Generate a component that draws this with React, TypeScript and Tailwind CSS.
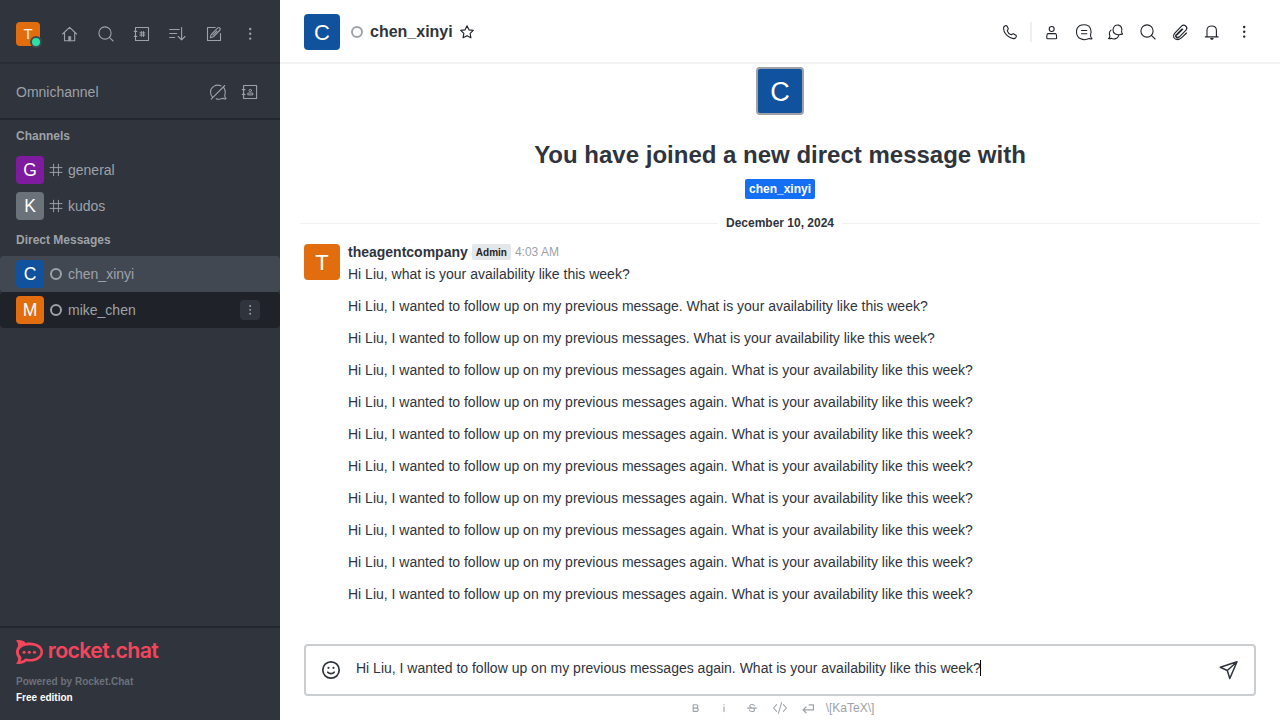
import React from 'react';

type IconProps = { children: React.ReactNode; className?: string; w?: number };

function Icon({ children, className = 'size-5', w = 1.1 }: IconProps) {
  return (
    <svg
      viewBox="0 0 20 20"
      className={`shrink-0 ${className}`}
      fill="none"
      stroke="currentColor"
      strokeWidth={w}
      strokeLinecap="round"
      strokeLinejoin="round"
    >
      {children}
    </svg>
  );
}

const Kebab = ({ className }: { className?: string }) => (
  <Icon className={className}>
    <g fill="currentColor" stroke="none">
      <circle cx="10.2" cy="5" r="1.2" />
      <circle cx="10.2" cy="9.8" r="1.2" />
      <circle cx="10.2" cy="14.6" r="1.2" />
    </g>
  </Icon>
);

const Search = () => (
  <Icon>
    <circle cx="9" cy="9" r="6.1" />
    <path d="M13.4 13.4 17.1 17" />
  </Icon>
);

const Hash = () => (
  <Icon className="size-4 text-[#9ea2a8]" w={1.2}>
    <path d="M7 2.8v14.4M13 2.8v14.4M2.5 7h15M2.5 13h15" />
  </Icon>
);

const Offline = ({ className }: { className: string }) => (
  <span className={`mx-0.5 size-3 shrink-0 rounded-full ${className}`} />
);

function SideItem({ letter, color, name, icon, row = '', menu = false }: {
  letter: string; color: string; name: string; icon: React.ReactNode; row?: string; menu?: boolean;
}) {
  return (
    <div className={`flex h-9 items-center pr-5 pl-4 ${row}`}>
      <span className={`flex size-7 items-center justify-center rounded text-[17.5px] leading-7 text-white ${color}`}>{letter}</span>
      <span className="ml-1 flex">{icon}</span>
      <span className="ml-1 flex-1 text-sm leading-5 text-[#9ea2a8]">{name}</span>
      {menu && (
        <span className="flex size-5 items-center justify-center rounded bg-[#2f343d] text-[#9ea2a8]">
          <Kebab className="size-4" />
        </span>
      )}
    </div>
  );
}

function Sidebar() {
  return (
    <aside className="flex w-[280px] shrink-0 flex-col bg-[#2f343d] text-[#9ea2a8]">
      <div className="flex h-16 items-center border-b-2 border-[#2a2d35] pt-1.5 pl-4">
        <span className="relative flex size-6 items-center justify-center rounded bg-[#e26d0e] text-[15px] text-white/90">
          T
          <span className="absolute -right-0.5 -bottom-0.5 size-3 rounded-full border-2 border-[#414852] bg-[#2de0a5]" />
        </span>
        <div className="ml-5 flex gap-4">
          <Icon>
            <path d="M2.6 10 9.6 3.4 16.6 10M4.5 8.6v8.1h10.2V8.6" />
            <path d="M8.6 16.5v-4h2.2v4z" fill="currentColor" strokeWidth={0.6} />
          </Icon>
          <Search />
          <Icon>
            <path d="M3.5 3.5h13v13h-13zM2.3 7.4h2.5M2.3 12.4h2.5" />
            <path d="M9.3 7.5v5M11.500 7.500v5M7.900 8.900h5M7.900 11.100h5" strokeWidth={1} />
          </Icon>
          <Icon>
            <path d="M1.7 5.5h9.5M1.7 9.5h7M1.7 13.5h5M13.6 3.6v12.2M10.2 12.5l3.4 3.3 3.4-3.3" />
          </Icon>
          <Icon>
            <path d="M11.2 3.5H3.5v13h13V9.500" />
            <path d="M6.300 13.800l.8-3.200 6.700-6.700c1.400-1 3.200.6 2.200 2.100l-6.600 6.800zM8.900 11.200l3.900-4" />
          </Icon>
          <Kebab />
        </div>
      </div>
      <div className="flex h-14 items-center border-b-2 border-[#24272e] pt-0.5 pr-5 pl-4">
        <span className="flex-1 text-sm leading-5">Omnichannel</span>
        <div className="flex gap-3">
          <Icon>
            <path d="M13.2 3.9C7.5 1.6 2.5 5.4 2.5 10c0 2.3.8 4 2 5.2M15.8 5.6c1.5 2.2 1.8 5 .9 7.7-.1 1.4.3 2.4 1.3 3.4-1.2.3-2.3.2-3.3-.4-2.2 1.2-4.5 1.2-6.5.6M3.2 17.2 16.8 3.5" />
          </Icon>
          <Icon>
            <path d="M3.6 3.5h13v13h-13zM2.3 7.6h2.7M2.3 12.4h2.7" />
            <circle cx="10.3" cy="8.5" r="1.2" strokeWidth={1} />
            <path d="M7.8 12.5v-1.400h5v1.400z" strokeWidth={1} />
          </Icon>
        </div>
      </div>
      <div className="flex-1">
        <div className="flex h-8 items-center px-4 text-xs font-bold">Channels</div>
        <SideItem letter="G" color="bg-[#7f1b9f]" name="general" icon={<Hash />} />
        <SideItem letter="K" color="bg-[#6c727a]" name="kudos" icon={<Hash />} />
        <div className="flex h-8 items-center px-4 text-xs font-bold">Direct Messages</div>
        <SideItem letter="C" color="bg-[#10529e]" name="chen_xinyi" row="rounded-sm bg-[#414852]" icon={<Offline className="border-2 border-[#9ea2a8]" />} />
        <SideItem letter="M" color="bg-[#e26d0e]" name="mike_chen" row="rounded-sm bg-[#1f2329]" menu icon={<Offline className="border-2 border-[#9ea2a8]" />} />
      </div>
      <div className="h-[94px] border-t-2 border-[#24272e] px-4 pt-3">
        <svg viewBox="0 0 160 24" className="h-6 w-40 overflow-visible" fill="#f5455c">
          <path
            fillRule="evenodd"
            d="M0 .4C3.700-.4 7.600.2 9.600 3 18.500 1.400 27 5 27 12s-8.500 10.800-16.500 9.300C7.500 23.700 3.700 24.700 0 23.500c2.200-2 2.500-4 1.800-6.200-2.400-3-2.400-7.500 0-10.600C2.500 4.600 2 2.200 0 .4zM13.800 5.200C7.500 5.200 2.900 8 2.900 12c0 2 .9 3.600 2.400 4.900.3 1.600.1 2.900-.9 4.100 2-.1 3.600-.9 4.700-2.400 8 1.700 15.400-1.400 15.400-6.600 0-4-4.700-6.800-10.700-6.800z"
          />
          <circle cx="8.100" cy="12.200" r="1.550" />
          <circle cx="13.300" cy="12.200" r="1.550" />
          <circle cx="18.500" cy="12.200" r="1.550" />
          <text x="31.800" y="18" fontSize="21.300" fontWeight="600" fontFamily="Inter, sans-serif" textLength="111" lengthAdjust="spacing">rocket.chat</text>
        </svg>
        <div className="mt-2.5 text-[10px] leading-4 font-bold text-[#6c727a]">Powered by Rocket.Chat</div>
        <div className="text-[10px] leading-4 font-bold text-white">Free edition</div>
      </div>
    </aside>
  );
}

function Header() {
  return (
    <header className="flex h-16 shrink-0 items-center border-b-2 border-[#f2f3f5] pt-0.5 pr-[26px] pl-6 text-[#2f343d]">
      <span className="flex size-9 items-center justify-center rounded bg-[#10529e] text-[22px] text-white">C</span>
      <span className="ml-[9px] flex"><Offline className="border-2 border-[#9ea2a8]" /></span>
      <span className="ml-[5px] text-base leading-6 font-bold">chen_xinyi</span>
      <Icon className="ml-1.5 size-4 text-[#1f2329]" w={1.4}>
        <path d="M10 2.3l2.4 5 5.500.7-4 3.800 1 5.500-4.900-2.700-4.900 2.700 1-5.500-4-3.800 5.500-.7z" />
      </Icon>
      <div className="ml-auto flex items-center gap-3 text-[#1f2329]">
        <Icon>
          <path d="M3.700 5.100c.8-1.200 2.400-2 3.300-1l1.200 2.400c.4 1-.9 1.600-.9 2.300.5 1.700 2.200 3.400 3.900 3.900.7 0 1.300-1.300 2.300-.9l2.400 1.400c1 .9.200 2.500-1 3.200C9.800 17.600 2.700 11 3.700 5.100z" />
        </Icon>
        <span className="-ml-0.5 h-5 w-0.5 bg-[#eeeff1]" />
        <Icon className="-ml-0.5 size-5">
          <circle cx="9.700" cy="7" r="2.500" />
          <path d="M5.900 11.600h7.600c.9 0 1.200 2.600 1.100 4.400 0 .4-.3.700-.7.700H5.500c-.4 0-.7-.3-.7-.7-.1-1.800.2-4.400 1.100-4.400z" />
        </Icon>
        <Icon>
          <path d="M15.200 16.600C9.500 19.200 2.500 16.900 2.500 10S8.500 2.200 12.500 3c3.800.8 5.500 5.600 4 10.100-.1 1.400.4 2.500 1.500 3.500-1 .3-2 .3-2.800 0zM7.500 8.500h5.300M7.500 11.700h5.300" />
        </Icon>
        <Icon>
          <path d="M14.600 12.200c-3.600 1.500-7.600-.4-7.600-4.300s3.200-5.300 5.600-4.800c2.700.6 3.900 3.600 3 6.500 0 1 .3 1.800 1 2.500-.7.300-1.400.3-2 .1zM5 8.200c-1.600 1.500-2 3.700-1.100 5.700 0 1-.4 1.900-1.400 2.700.9.300 1.900.2 2.700-.3 3 1.400 6.500.4 7.500-2.700" />
        </Icon>
        <Search />
        <Icon w={1.150}>
          <path d="M7.300 12.700l5.500-5.500M16.500 11l-4.800 4.700c-1.300 1.300-2.500 1.900-4 1.900-3.600 0-5.600-3.700-3.100-6.300l6.900-7.100c2.700-2.700 7 .8 4.500 3.900l-7.100 7.200c-1.500 1.500-4.100-.4-2.700-2.300l5.600-5.800" />
          <path d="M5.800 13c-.6 1.500 1.200 2.800 2.600 2.100" />
        </Icon>
        <Icon>
          <path d="M3.300 14.900h12.800M5 14.600V8.200C5 2.600 14.400 2.600 14.400 8.200v6.400" />
          <path d="M8.700 16.500h2.400c-.2 1-2.200 1-2.400 0z" fill="currentColor" />
        </Icon>
        <Kebab />
      </div>
    </header>
  );
}

const again = 'Hi Liu, I wanted to follow up on my previous messages again. What is your availability like this week?';
const messages = [
  'Hi Liu, I wanted to follow up on my previous message. What is your availability like this week?',
  'Hi Liu, I wanted to follow up on my previous messages. What is your availability like this week?',
  ...Array<string>(8).fill(again),
];

export default function App() {
  return (
    <div className="flex h-[720px] w-[1280px] overflow-hidden bg-white font-['Liberation_Sans',Arial,sans-serif]">
      <Sidebar />
      <main className="flex min-w-0 flex-1 flex-col text-[#2f343d]">
        <Header />
        <section className="flex-1">
          <div className="flex flex-col items-center pt-[3px]">
            <span className="flex size-12 items-center justify-center rounded border-2 border-[#9ea2a8] bg-[#10529e] pt-0.5 text-[27px] text-white">C</span>
            <h1 className="mt-6 text-2xl leading-8 font-bold">You have joined a new direct message with</h1>
            <span className="mt-2 flex h-5 items-center rounded-xs bg-[#156ff5] px-1 text-xs font-bold text-white">chen_xinyi</span>
          </div>
          <div className="mx-5 mt-4 flex h-4 items-center gap-2">
            <span className="h-px flex-1 bg-[#f0f1f3]" />
            <span className="text-xs font-bold">December 10, 2024</span>
            <span className="h-px flex-1 bg-[#f0f1f3]" />
          </div>
          <div className="mt-[11px] flex px-6 pt-0.5">
            <span className="flex size-9 items-center justify-center rounded bg-[#e26d0e] text-[22px] text-white">T</span>
            <div className="ml-2">
              <div className="flex h-4 items-center">
                <span className="text-sm font-bold">theagentcompany</span>
                <span className="ml-1 flex h-4 items-center rounded-xs bg-[#e4e7ea] px-1 text-[10px] font-bold text-[#1f2329]">Admin</span>
                <span className="ml-1 text-xs text-[#9ea2a8]">4:03 AM</span>
              </div>
              <p className="mt-1 text-sm leading-5">Hi Liu, what is your availability like this week?</p>
            </div>
          </div>
          <div className="mt-1.5 ml-[68px]">
            {messages.map((m, i) => (
              <p key={i} className="py-1.5 text-sm leading-5">{m}</p>
            ))}
          </div>
        </section>
        <footer className="h-[76px] shrink-0 px-6">
          <div className="flex h-[52px] items-center rounded border-2 border-[#cbced1] px-[15px]">
            <Icon className="size-5" w={1.700}>
              <circle cx="10" cy="10" r="8.200" />
              <path d="M6.800 12.200c1.400 1.900 5 1.900 6.400 0" />
              <g fill="currentColor" stroke="none"><circle cx="7.500" cy="7.800" r="1.100" /><circle cx="12.500" cy="7.800" r="1.100" /></g>
            </Icon>
            <span className="-mt-1 ml-[15px] flex flex-1 items-center text-sm leading-5">
              {again}
              <span className="-ml-px h-4 w-px bg-black" />
            </span>
            <Icon className="size-5" w={1.500}>
              <path d="M18 1.800 1.300 7.300l7 3.200L10.800 18.500zM18 1.800 8.300 10.500" />
            </Icon>
          </div>
          <div className="flex h-6 items-center justify-center gap-3 pl-0.5 text-[#9ea2a8]">
            <Icon className="size-4" w={1.400}><path d="M6.500 6v8.200h4.300c2.700 0 2.700-4.100 0-4.100H6.500M6.500 6h3.900c2.500 0 2.500 4.100 0 4.100" /></Icon>
            <Icon className="size-4" w={1.400}><path d="M10 8.500v6M10 5.600v.3" /></Icon>
            <Icon className="size-4" w={1.400}><path d="M13 7.200C12.200 5 7.200 5.200 7.200 7.800c0 2.700 6 1.500 6 4.300 0 2.900-5.600 3-6.600.3M4.500 10.100h11" /></Icon>
            <Icon className="size-4" w={1.300}><path d="M5.700 5.700 2 10l3.700 4.300M14.300 5.700 18 10l-3.700 4.300M12 3.200 8 16.800" /></Icon>
            <Icon className="size-4" w={1.500}><path d="M11.500 6.200h5.300v6.200H4M7.500 8.800 3.800 12.400l3.700 3.600" /></Icon>
            <span className="-ml-0.5 text-xs leading-4">\[KaTeX\]</span>
          </div>
        </footer>
      </main>
    </div>
  );
}
